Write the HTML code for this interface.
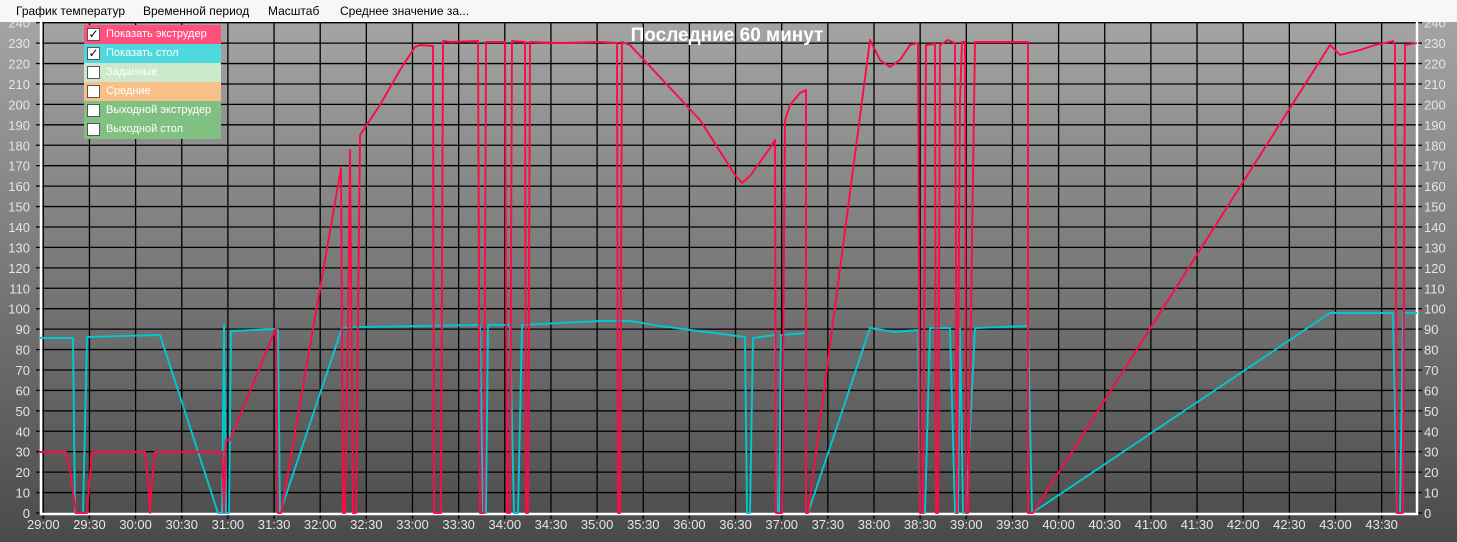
<!DOCTYPE html>
<html><head><meta charset="utf-8"><style>
html,body{margin:0;padding:0;width:1457px;height:542px;overflow:hidden;font-family:"Liberation Sans","DejaVu Sans",sans-serif;}
#menu{position:absolute;left:0;top:0;width:1457px;height:22px;background:#f7f7f7;font-size:12px;color:#000;}
#menu span{position:absolute;top:4px;}
#chart{position:absolute;left:0;top:22px;}
.leg{position:absolute;left:84px;width:137px;height:19px;color:#fff;font-size:11px;line-height:19px;}
.leg i{position:absolute;left:3px;top:3px;width:11px;height:11px;background:#fff;border:1px solid #555;font-style:normal;color:#000;font-size:12px;line-height:11px;text-align:center;font-weight:bold}
.leg b{position:absolute;left:22px;font-weight:normal}
</style></head><body>
<div id="menu"><span style="left:16px">График температур</span><span style="left:143px">Временной период</span><span style="left:268px">Масштаб</span><span style="left:340px">Среднее значение за...</span></div>
<svg id="chart" width="1457" height="520" viewBox="0 22 1457 520" xmlns="http://www.w3.org/2000/svg">
<defs><linearGradient id="g" x1="0" y1="0" x2="0" y2="1"><stop offset="0" stop-color="#a4a4a4"/><stop offset="1" stop-color="#4a4a4a"/></linearGradient></defs>
<rect x="0" y="22" width="1457" height="520" fill="url(#g)"/>
<g stroke="#000" stroke-width="1.3" id="grid"></g>
<line x1="41" y1="22" x2="41" y2="515" stroke="#fff" stroke-width="2.5"/>
<line x1="1417" y1="22" x2="1417" y2="515" stroke="#fff" stroke-width="2.5"/>
<line x1="40" y1="514" x2="1418" y2="514" stroke="#fff" stroke-width="2.5"/>
<g id="labs" font-size="13" fill="#e4e4ea"></g>
<text x="727" y="41" font-size="19" font-weight="bold" fill="#fff" text-anchor="middle">Последние 60 минут</text>
<polyline fill="none" stroke="#00c8d0" stroke-width="1.9" stroke-linejoin="round" points="40,338 73,338 75,513 83,513 87,337 160,335 218,513 222,513 224,325 226,513 229,513 231,331 276,329 278,330 280,513 342,328 360,327 480,325 483,513 486,513 488,325 510,325 514,513 518,513 522,325 560,323 600,321 630,321 660,326 745,337 747,513 750,513 753,338 775,335 777,513 779,513 781,335 806,333 806,513 808,513 870,328 895,332 918,330 920,513 925,513 930,328 950,328 955,513 958,513 960,328 963,513 966,513 975,328 1028,326 1032,513 1330,313 1393,313 1397,513 1400,513 1403,313 1417,313"/>
<polyline fill="none" stroke="#ff0a46" stroke-width="1.9" stroke-linejoin="round" points="40,452 66,452 70,470 76,513 87,513 92,452 145,452 148,480 150,513 152,480 155,452 222,452 224,513 226,440 230,440 276,328 278,513 281,513 341,168 343,513 345,513 348,330 350,150 353,513 356,513 360,135 380,105 400,70 415,47 420,45 433,46 434,513 438,513 441,513 443,41 450,42 478,41 480,513 484,513 486,42 505,42 507,513 510,513 512,41 525,42 526,513 528,513 530,42 560,43 600,42 617,43 618,513 620,513 622,42 630,45 700,120 735,175 742,183 750,176 770,148 775,140 776,513 782,513 785,120 790,105 800,93 806,90 806,513 808,513 870,40 880,60 890,67 900,60 910,45 918,43 920,513 923,513 926,45 935,44 936,513 938,513 940,45 948,40 955,43 957,513 960,100 962,42 965,42 966,513 968,513 975,42 1028,42 1028,513 1033,513 1330,45 1340,55 1360,50 1375,45 1385,43 1393,41 1395,45 1397,513 1403,513 1405,45 1417,43"/>
</svg>
<div class="leg" style="top:25px;background:#ff4f7a"><i>✓</i><b>Показать экструдер</b></div>
<div class="leg" style="top:44px;background:#4dd9dd"><i>✓</i><b>Показать стол</b></div>
<div class="leg" style="top:63px;background:#cce9cc"><i></i><b>Заданные</b></div>
<div class="leg" style="top:82px;background:#f8bf88"><i></i><b>Средние</b></div>
<div class="leg" style="top:101px;background:#80c080"><i></i><b>Выходной экструдер</b></div>
<div class="leg" style="top:120px;background:#80c080"><i></i><b>Выходной стол</b></div>
<script>
var ns="http://www.w3.org/2000/svg",g=document.getElementById('grid'),l=document.getElementById('labs');
function el(p,t,a){var e=document.createElementNS(ns,t);for(var k in a)e.setAttribute(k,a[k]);p.appendChild(e);return e;}
for(var v=0;v<=240;v+=10){var y=513-2.043*v;
 if(v>0)el(g,'line',{x1:41,x2:1417,y1:y,y2:y});
 el(g,'line',{x1:36,x2:41,y1:y,y2:y});el(g,'line',{x1:1417,x2:1422,y1:y,y2:y});
 var t=el(l,'text',{x:30,y:y+5,'text-anchor':'end'});t.textContent=v;
 t=el(l,'text',{x:1424,y:y+5});t.textContent=v;}
for(var k=0;k<=29;k++){var x=43.3+46.15*k;
 el(g,'line',{x1:x,x2:x,y1:22,y2:519});
 var m=29+Math.floor(k/2),s=k%2?'30':'00';
 var t=el(l,'text',{x:x,y:529,'text-anchor':'middle'});t.textContent=m+':'+s;}
</script>
</body></html>
